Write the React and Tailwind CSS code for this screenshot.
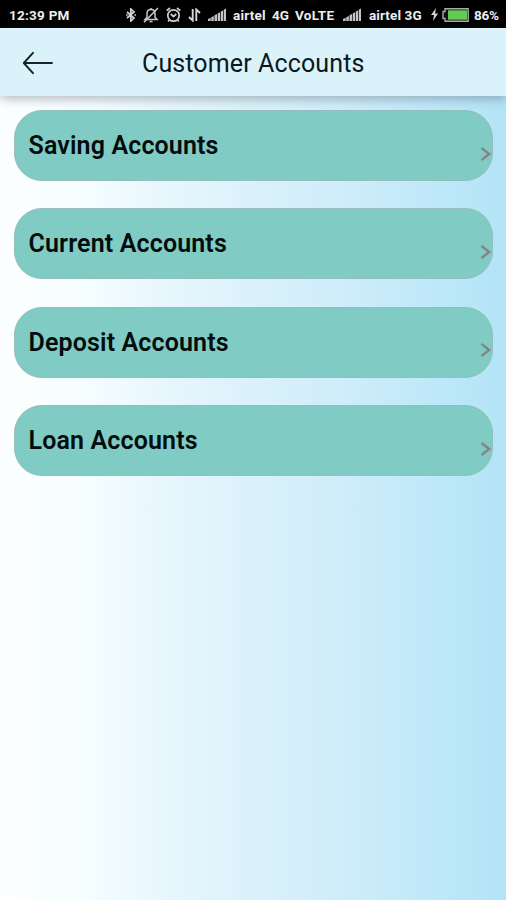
const accounts = ["Saving Accounts", "Current Accounts", "Deposit Accounts", "Loan Accounts"];

function Bluetooth() {
  return (
    <svg className="ml-[57px] h-[14px] w-[10px] shrink-0" viewBox="0 0 10 14" fill="none" stroke="#d4d4d4" strokeWidth="1.7">
      <path d="M1 4l7 6-3.2 3V1L8 4l-7 6" />
      <path d="M0 7h1.6M8.400 7H10" />
    </svg>
  );
}

function BellOff() {
  return (
    <svg className="ml-[7px] h-4 w-4 shrink-0" viewBox="0 0 16 16" fill="none" stroke="#c9c9c9" strokeWidth="1.500">
      <path d="M2 12.500h12l-2-2.200V6.500C12 4 10.300 2.500 8 2.500S4 4 4 6.500v3.800z" />
      <path d="M6.500 14.500h3M8 1v1.500M1 15.200L15 1" />
    </svg>
  );
}

function Alarm() {
  return (
    <svg className="ml-[7px] h-4 w-[15px] shrink-0" viewBox="0 0 15 16" fill="none" stroke="#d0d0d0" strokeWidth="1.700">
      <circle cx="7.500" cy="8.500" r="5.700" />
      <path d="M4.700 7l2.800 2.500L10.300 7M.7 3.700L4 1M14.300 3.700L11 1M3.500 13L2 14.500M11.500 13l1.500 1.500" />
    </svg>
  );
}

function DataArrows() {
  return (
    <svg className="ml-[7px] h-[14px] w-[13px] shrink-0" viewBox="0 0 13 14" fill="none" stroke="#d8d8d8" strokeWidth="1.900">
      <path d="M4.700 1v11.500L1 9M8.300 13V1.500L12 5" />
    </svg>
  );
}

function Signal({ className }) {
  return (
    <svg className={"h-[13px] w-[18px] shrink-0 " + className} viewBox="0 0 18 13" fill="#c4c4c4">
      <path d="M0 13v-2l2.700-1.300V13zM3.300 13V9.200l2.500-1.300V13zM6.500 13V7.300L9 6v7zM9.700 13V5.500l2.400-1.300V13zM12.800 13V3.600l2.200-1.200V13zM15.700 13V1.800L18 .5V13z" />
    </svg>
  );
}

function StatusBar() {
  return (
    <div className="flex h-[28px] w-full shrink-0 items-center bg-black pt-[1px] text-[13.500px] leading-none font-bold whitespace-nowrap text-[#ededed]">
      <span className="mt-[2px] ml-[9px] w-[60px] shrink-0 tracking-[0.250px]">12:39 PM</span>
      <Bluetooth />
      <BellOff />
      <Alarm />
      <DataArrows />
      <Signal className="ml-[7px]" />
      <span className="mt-[2px] ml-[7px] w-[39px] shrink-0 tracking-[0.200px]">airtel</span>
      <span className="mt-[2px] w-[23px] shrink-0">4G</span>
      <span className="mt-[2px] w-[41px] shrink-0 tracking-[0.300px]">VoLTE</span>
      <Signal className="ml-[7px]" />
      <span className="mt-[2px] ml-[8px] w-[54px] shrink-0 tracking-[0.100px]">airtel 3G</span>
      <svg className="ml-[8px] h-[13px] w-[7px] shrink-0" viewBox="0 0 7 13" fill="#d5d5d5">
        <path d="M5 0L0 7h3L2 13l5-7.500H4z" />
      </svg>
      <svg className="ml-[4px] h-[14px] w-[27px] shrink-0" viewBox="0 0 27 14">
        <path d="M3 .8h23.200v12.400H3V10.500H1v-7h2z" fill="#111" stroke="#aaa" strokeWidth="1.400" />
        <path d="M6 2.300h19v9.400H6z" fill="#62cb52" />
      </svg>
      <span className="mt-[2px] ml-[5px] tracking-[-0.300px]">86%</span>
    </div>
  );
}

function AccountCard({ name }) {
  return (
    <button className="flex h-[71px] w-full items-center justify-between rounded-[28px] border border-[#94bdbc] bg-[#80cbc4] pl-[13.500px] text-left">
      <span className="mt-[1px] text-[25px] leading-[30px] font-semibold tracking-[0.140px] whitespace-nowrap text-[#030c0d]">{name}</span>
      <svg className="mt-[16px] h-[16px] w-[12px] shrink-0" viewBox="0 0 12 16" fill="none" stroke="#85858b" strokeWidth="2.500">
        <path d="M1.500 2l7.700 6-7.700 6" />
      </svg>
    </button>
  );
}

export default function App() {
  return (
    <div className="flex h-[900px] w-[506px] flex-col overflow-hidden bg-[linear-gradient(90deg,#fcffff_0%,#f4fdff_18%,#e6f6fd_34%,#d9f1fa_52%,#cdecfa_70%,#bde8f9_87%,#b2e4f6_100%)] font-['Roboto',sans-serif]">
      <StatusBar />
      <header className="z-10 flex h-[68px] w-full shrink-0 items-center border-t border-[#e4f5ff] bg-[#daf2fa] shadow-[0_3px_10px_rgba(70,75,90,0.380)]">
        <svg className="ml-[22px] h-[24px] w-[32px] shrink-0" viewBox="0 0 32 24" fill="none" stroke="#162429" strokeWidth="1.900" strokeLinecap="round" strokeLinejoin="round">
          <path d="M30 12H2M11 1.800L1.800 12 11 22.200" />
        </svg>
        <h1 className="mt-[2px] ml-[88px] text-[25px] leading-[30px] font-normal tracking-[0.120px] whitespace-nowrap text-[#0b171d]">Customer Accounts</h1>
      </header>
      <main className="flex flex-col gap-[27.400px] pt-[14px] pr-[13px] pl-[14px]">
        {accounts.map((name) => (
          <AccountCard key={name} name={name} />
        ))}
      </main>
    </div>
  );
}
